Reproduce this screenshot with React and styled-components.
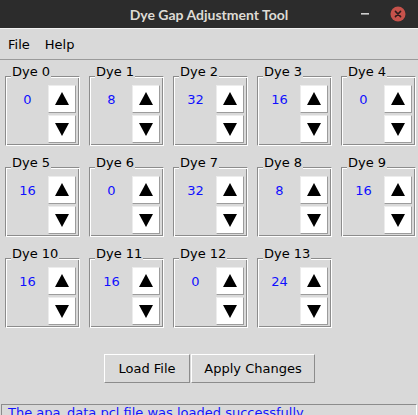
import React from "react";
import styled, { createGlobalStyle } from "styled-components";

const Global = createGlobalStyle`
  html, body { margin: 0; padding: 0; background: #d9d9d9; }
  body { overflow: hidden; }
  * { box-sizing: border-box; }
`;

const Window = styled.div`
  width: 418px;
  height: 415px;
  overflow: hidden;
  display: flex;
  flex-direction: column;
  background: #d9d9d9;
  font-family: "DejaVu Sans", sans-serif;
  font-size: 13px;
  line-height: 15px;
  color: #000;
`;

const TitleBar = styled.div`
  height: 28px;
  flex: none;
  background: #2c2c2c;
  display: grid;
  grid-template-columns: 1fr auto 1fr;
  align-items: center;
`;

const Title = styled.div`
  grid-column: 2;
  font-family: Lato, "DejaVu Sans", sans-serif;
  font-weight: 700;
  font-size: 14px;
  color: #dedbd5;
  padding-top: 1px;
`;

const Controls = styled.div`
  grid-column: 3;
  justify-self: end;
  display: flex;
  align-items: center;
  gap: 21px;
  padding-right: 12px;
`;

const MenuBar = styled.div`
  flex: none;
  height: 32px;
  border-top: 1px solid #f2f2f2;
  border-bottom: 1px solid #9a9a9a;
  display: flex;
  align-items: center;
  padding-left: 1px;
  gap: 1px;
`;

const MenuItem = styled.div`
  padding: 0 7px;
`;

const DyeGrid = styled.div`
  flex: none;
  display: grid;
  grid-template-columns: repeat(5, 75px);
  grid-auto-rows: 70px;
  column-gap: 9px;
  row-gap: 21px;
  padding: 16px 0 0 5px;
`;

const Frame = styled.div`
  position: relative;
  border: 1px solid;
  border-color: #8c8c8c #ffffff #ffffff #8c8c8c;
  box-shadow: inset 1px 1px 0 #ffffff, inset -1px -1px 0 #8c8c8c;
  padding: 1px;
  display: grid;
  grid-template-columns: 40px 30px;
  grid-template-rows: 30px 30px;
  align-content: end;
`;

const Legend = styled.div`
  position: absolute;
  top: -13px;
  left: 5px;
  padding: 0 1px;
  background: #d9d9d9;
  white-space: nowrap;
`;

const Value = styled.div`
  grid-column: 1;
  grid-row: 1;
  display: flex;
  align-items: center;
  justify-content: center;
  color: #1010ff;
  padding-left: 1px;
`;

const ArrowButton = styled.div`
  grid-column: 2;
  margin: 1px;
  background: #ffffff;
  border: 1px solid;
  border-color: #ececec #9c9c9c #9c9c9c #ececec;
  display: flex;
  align-items: center;
  justify-content: center;
  padding-bottom: ${(p) => (p.$up ? "2px" : "0")};
`;

const Actions = styled.div`
  flex: none;
  margin-top: 26px;
  display: flex;
  justify-content: center;
  gap: 1px;
  padding-left: 1px;
`;

const PushButton = styled.div`
  width: ${(p) => p.$w}px;
  height: 29px;
  border: 1px solid;
  border-color: #ffffff #8c8c8c #8c8c8c #ffffff;
  background: #d9d9d9;
  display: flex;
  align-items: center;
  justify-content: center;
`;

const StatusBar = styled.div`
  flex: none;
  margin: 21px 1px 0;
  height: 24px;
  border: 1px solid;
  border-color: #8c8c8c #ffffff #ffffff #8c8c8c;
  color: #1414ff;
  padding: 0 6px;
  white-space: nowrap;
`;

const Triangle = ({ up }) => (
  <svg width="14" height="13" viewBox="0 0 14 13">
    <polygon points={up ? "7,0 14,13 0,13" : "0,0 14,0 7,13"} fill="#000" />
  </svg>
);

const dyes = [0, 8, 32, 16, 0, 16, 0, 32, 8, 16, 16, 16, 0, 24];

export default function App() {
  return (
    <Window>
      <Global />
      <TitleBar>
        <Title>Dye Gap Adjustment Tool</Title>
        <Controls>
          <svg width="8" height="2" viewBox="0 0 8 2">
            <rect x="0" y="0" width="8" height="1.6" fill="#cfcfcf" />
          </svg>
          <svg width="16" height="16" viewBox="0 0 16 16">
            <circle cx="8" cy="8" r="7.5" fill="#c6524b" />
            <path d="M5.4 5.4 L10.6 10.6 M10.6 5.4 L5.4 10.6" stroke="#2c1b1b" strokeWidth="1.5" strokeLinecap="round" />
          </svg>
        </Controls>
      </TitleBar>
      <MenuBar>
        <MenuItem>File</MenuItem>
        <MenuItem>Help</MenuItem>
      </MenuBar>
      <DyeGrid>
        {dyes.map((v, i) => (
          <Frame key={i}>
            <Legend>Dye {i}</Legend>
            <Value>{v}</Value>
            <ArrowButton $up>
              <Triangle up />
            </ArrowButton>
            <ArrowButton>
              <Triangle />
            </ArrowButton>
          </Frame>
        ))}
      </DyeGrid>
      <Actions>
        <PushButton $w={86}>Load File</PushButton>
        <PushButton $w={124}>Apply Changes</PushButton>
      </Actions>
      <StatusBar>The apa_data.pcl file was loaded successfully.</StatusBar>
    </Window>
  );
}
